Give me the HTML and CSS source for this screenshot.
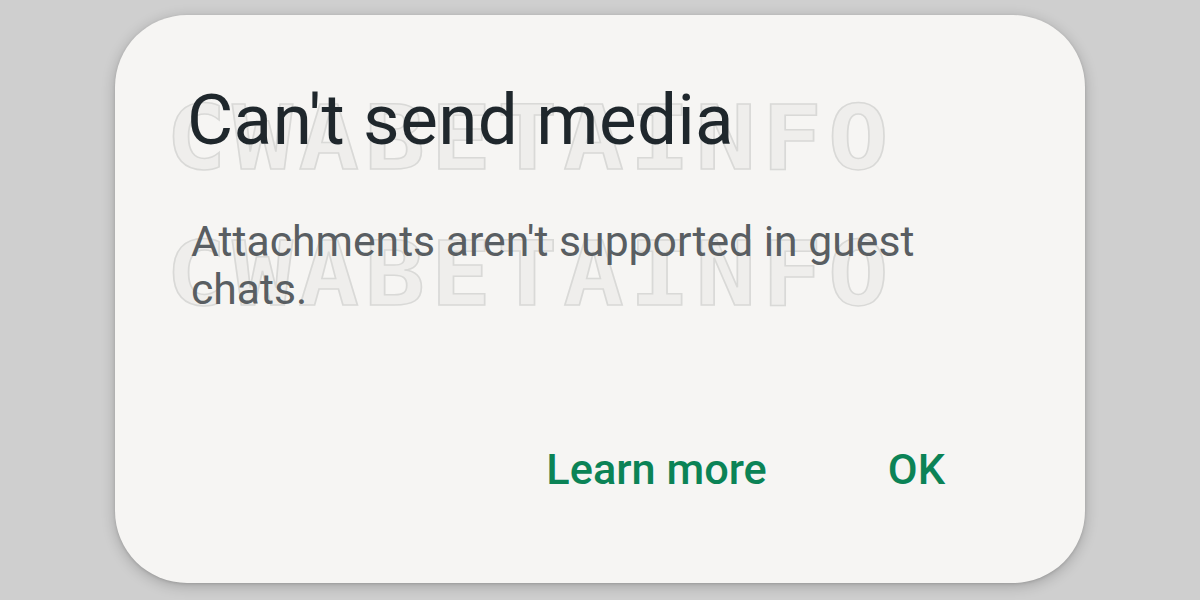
FILE: index.html
```html
<!DOCTYPE html>
<html lang="en">
<head>
<meta charset="utf-8">
<title>Can't send media</title>
<link rel="stylesheet" href="styles.css">
</head>
<body>
<div class="dialog">
  <div class="watermark" aria-hidden="true">
    <span class="wm-row wm-row-1">CWABETAINFO</span>
    <span class="wm-row wm-row-2">CWABETAINFO</span>
  </div>
  <h1 class="title">Can't send media</h1>
  <p class="message">Attachments aren't supported in guest chats.</p>
  <div class="actions">
    <button class="action">Learn more</button>
    <button class="action">OK</button>
  </div>
</div>
</body>
</html>
```

FILE: styles.css
```css
html, body {
  margin: 0;
  padding: 0;
}
body {
  width: 1200px;
  height: 600px;
  background: #cfcfcf;
  display: flex;
  justify-content: center;
  align-items: flex-start;
  padding-top: 15px;
  box-sizing: border-box;
  font-family: Roboto, "Liberation Sans", sans-serif;
  overflow: hidden;
}
.dialog {
  position: relative;
  width: 970px;
  height: 568px;
  box-sizing: border-box;
  background: #f6f5f3;
  border-radius: 72px;
  box-shadow: 0 3px 14px rgba(0, 0, 0, 0.22), 0 1px 3px rgba(0, 0, 0, 0.12);
  padding: 65px 140px 0 72px;
  display: flex;
  flex-direction: column;
}
.watermark {
  position: absolute;
  left: 51px;
  top: 0;
  pointer-events: none;
}
.wm-row {
  position: absolute;
  left: 0;
  white-space: nowrap;
  font-family: "DejaVu Sans Mono", monospace;
  font-weight: 700;
  font-size: 89px;
  line-height: 89px;
  letter-spacing: 5px;
  color: #efeeec;
  -webkit-text-stroke: 1.5px #d9d9d7;
  transform: scaleX(1.13);
  transform-origin: 0 0;
}
.wm-row-1 { top: 79px; }
.wm-row-2 { top: 215px; }
.title {
  position: relative;
  margin: 0;
  font-size: 71px;
  line-height: 80px;
  font-weight: 400;
  color: #1f272c;
  letter-spacing: 0.4px;
}
.message {
  position: relative;
  margin: 57px 0 0 4px;
  font-size: 42.7px;
  line-height: 48px;
  color: #595e62;
}
.actions {
  position: relative;
  display: flex;
  justify-content: flex-end;
  gap: 121px;
  margin-top: 132px;
}
.action {
  border: 0;
  background: none;
  padding: 0;
  font-family: Roboto, "Liberation Sans", sans-serif;
  font-size: 43.3px;
  line-height: 50px;
  font-weight: 500;
  color: #0b8356;
}
```
